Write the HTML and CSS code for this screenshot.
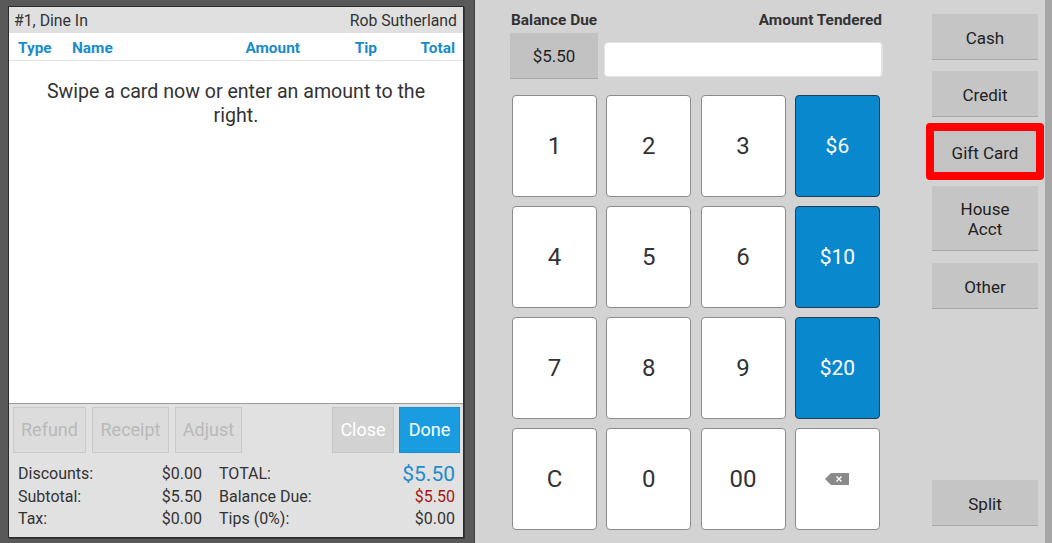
FILE: index.html
```html
<!DOCTYPE html>
<html lang="en">
<head>
<meta charset="utf-8">
<title>Payment</title>
<link rel="stylesheet" href="styles.css">
</head>
<body>
<div class="screen">
  <section class="ticket">
    <header class="ticket-head">
      <span>#1, Dine In</span>
      <span>Rob Sutherland</span>
    </header>
    <div class="cols">
      <span>Type</span>
      <span>Name</span>
      <span class="r">Amount</span>
      <span class="r">Tip</span>
      <span class="r">Total</span>
    </div>
    <div class="payments">
      <p class="hint">Swipe a card now or enter an amount to the right.</p>
    </div>
    <div class="actions">
      <button class="act off w-refund">Refund</button>
      <button class="act off w-receipt">Receipt</button>
      <button class="act off w-adjust">Adjust</button>
      <span class="spacer"></span>
      <button class="act close">Close</button>
      <button class="act done">Done</button>
    </div>
    <div class="totals">
      <dl class="sum left">
        <dt>Discounts:</dt><dd>$0.00</dd>
        <dt>Subtotal:</dt><dd>$5.50</dd>
        <dt>Tax:</dt><dd>$0.00</dd>
      </dl>
      <dl class="sum right">
        <dt>TOTAL:</dt><dd class="total">$5.50</dd>
        <dt>Balance Due:</dt><dd class="due">$5.50</dd>
        <dt>Tips (0%):</dt><dd>$0.00</dd>
      </dl>
    </div>
  </section>

  <section class="tender">
    <div class="entry">
      <div class="labels">
        <span>Balance Due</span>
        <span>Amount Tendered</span>
      </div>
      <div class="fields">
        <div class="balance">$5.50</div>
        <div class="amount"></div>
      </div>
      <div class="keypad">
        <button class="key">1</button>
        <button class="key">2</button>
        <button class="key">3</button>
        <button class="key quick">$6</button>
        <button class="key">4</button>
        <button class="key">5</button>
        <button class="key">6</button>
        <button class="key quick">$10</button>
        <button class="key">7</button>
        <button class="key">8</button>
        <button class="key">9</button>
        <button class="key quick">$20</button>
        <button class="key">C</button>
        <button class="key">0</button>
        <button class="key">00</button>
        <button class="key" aria-label="Backspace">
          <svg width="24" height="12" viewBox="0 0 24 12">
            <polygon points="0,6 6,0 24,0 24,12 6,12" fill="#8a8a8a"/>
            <path d="M11.5 3.5 L16.5 8.5 M16.5 3.5 L11.5 8.5" stroke="#fff" stroke-width="1.4"/>
          </svg>
        </button>
      </div>
    </div>
    <nav class="methods">
      <button class="method m-cash">Cash</button>
      <button class="method m-credit">Credit</button>
      <div class="mark"><button class="method gift">Gift Card</button></div>
      <button class="method m-house">House<br>Acct</button>
      <button class="method m-other">Other</button>
      <button class="method m-split">Split</button>
    </nav>
  </section>
  <div class="edge"></div>
</div>
</body>
</html>
```

FILE: styles.css
```css
* { box-sizing: border-box; }

html, body {
  margin: 0;
  padding: 0;
  width: 1052px;
  height: 543px;
  overflow: hidden;
  background: #595959;
  font-family: Roboto, "Liberation Sans", sans-serif;
  color: #333;
}

button {
  font-family: inherit;
  margin: 0;
  padding: 0;
  cursor: pointer;
}

.screen {
  display: flex;
  height: 543px;
}

/* ---------- ticket panel ---------- */
.ticket {
  margin: 6px 0 0 8px;
  width: 456px;
  height: 532px;
  border: 1px solid #2b2b2b;
  background: #e1e1e1;
  display: flex;
  flex-direction: column;
  box-shadow: 1px 1px 0 #3a3a3a;
}

.ticket-head {
  height: 26px;
  padding: 1px 6px 0 5px;
  display: flex;
  justify-content: space-between;
  align-items: center;
  font-size: 15.8px;
  color: #333;
  background: #e0e0e0;
}

.cols {
  height: 28px;
  background: #fff;
  border-bottom: 1px solid #e2e2e2;
  padding: 2px 8px 0 9px;
  display: grid;
  grid-template-columns: 54px 1fr 80px 77px 78px;
  align-items: center;
  font-size: 15.4px;
  font-weight: bold;
  color: #1a8cc9;
}

.cols .r { text-align: right; }

.payments {
  flex: 1;
  background: #fff;
  border-bottom: 1px solid #9a9a9a;
  padding-top: 19px;
}

.hint {
  margin: 0 auto;
  width: 400px;
  text-align: center;
  font-size: 19.6px;
  line-height: 24px;
  color: #333;
}

.actions {
  display: flex;
  gap: 6px;
  padding: 3px 3px 0 4px;
  height: 50px;
}

.act {
  height: 46px;
  border: 1px solid #c9c9c9;
  background: #dcdcdc;
  font-size: 18px;
  color: #b9b9b9;
}

.w-refund { width: 73px; }
.w-receipt { width: 77px; }
.w-adjust { width: 67px; }
.spacer { flex: 1; }

.act.close {
  width: 62px;
  background: #d2d2d2;
  border-color: #c6c6c6;
  color: #fff;
}

.act.done {
  width: 61px;
  background: #1a9de0;
  border-color: #1890cf;
  color: #fff;
  margin-left: -1px;
}

.totals {
  display: flex;
  padding: 9px 8px 7px 9px;
  gap: 17px;
}

.sum {
  margin: 0;
  display: grid;
  grid-template-columns: 1fr auto;
  grid-auto-rows: 22.5px;
  align-items: center;
  font-size: 16px;
  color: #333;
}

.sum dt, .sum dd { margin: 0; }
.sum dd { text-align: right; }
.sum.left { width: 184px; }
.sum.right { flex: 1; }

.sum .total {
  font-size: 21px;
  color: #1d8ccc;
}

.sum .due { color: #a31414; }

/* ---------- tender panel ---------- */
.tender {
  margin-left: 10px;
  width: 571px;
  height: 543px;
  background: #d3d3d3;
  border-left: 1px solid #3f3f3f;
  display: flex;
  padding-left: 35px;
}

.entry {
  width: 373px;
  padding-top: 11px;
}

.labels {
  display: flex;
  justify-content: space-between;
  font-size: 15.4px;
  font-weight: bold;
  color: #333;
  padding: 0 1px 0 1px;
  height: 17px;
}

.fields {
  display: flex;
  align-items: flex-start;
  margin-top: 5px;
  gap: 6px;
}

.balance {
  width: 88px;
  height: 46px;
  background: #c2c2c2;
  border-bottom: 1px solid #a9a9a9;
  display: flex;
  align-items: center;
  justify-content: center;
  font-size: 17px;
  color: #222;
}

.amount {
  margin-top: 9px;
  width: 279px;
  height: 35px;
  background: #fff;
  border: 1px solid #e4e4e4;
  border-radius: 4px;
  box-shadow: inset -3px 0 0 -2px #e0e0e0;
}

.keypad {
  margin: 16px 0 0 2px;
  display: grid;
  grid-template-columns: repeat(4, 85px);
  grid-auto-rows: 102px;
  column-gap: 9.3px;
  row-gap: 9px;
}

.key {
  background: #fff;
  border: 1px solid #8c8c8c;
  border-radius: 4px;
  font-size: 24px;
  color: #333;
  display: flex;
  align-items: center;
  justify-content: center;
}

.key.quick {
  background: #0a88cd;
  border-color: #1d3f55;
  color: #fff;
  font-size: 21px;
}

.methods {
  margin-left: 49px;
  width: 106px;
  padding-top: 14px;
  display: flex;
  flex-direction: column;
}

.method {
  width: 106px;
  height: 46px;
  padding-top: 2px;
  background: #c5c5c5;
  border: none;
  border-bottom: 1px solid #a8a8a8;
  font-size: 17px;
  line-height: 20px;
  color: #222;
}

.m-credit { margin-top: 11px; }

.mark {
  margin: 6px 0 0 -6px;
  width: 118px;
  height: 57px;
  border: 8px solid #ff0000;
  border-radius: 4px;
}

.method.gift {
  width: 102px;
  height: 41px;
  border-bottom: none;
  background: #c3c3c3;
}

.m-house {
  margin-top: 6px;
  height: 65px;
}

.m-other { margin-top: 12px; }

.m-split { margin-top: 171px; }

.edge {
  flex: 1;
  background: #a6a6a6;
}
```
